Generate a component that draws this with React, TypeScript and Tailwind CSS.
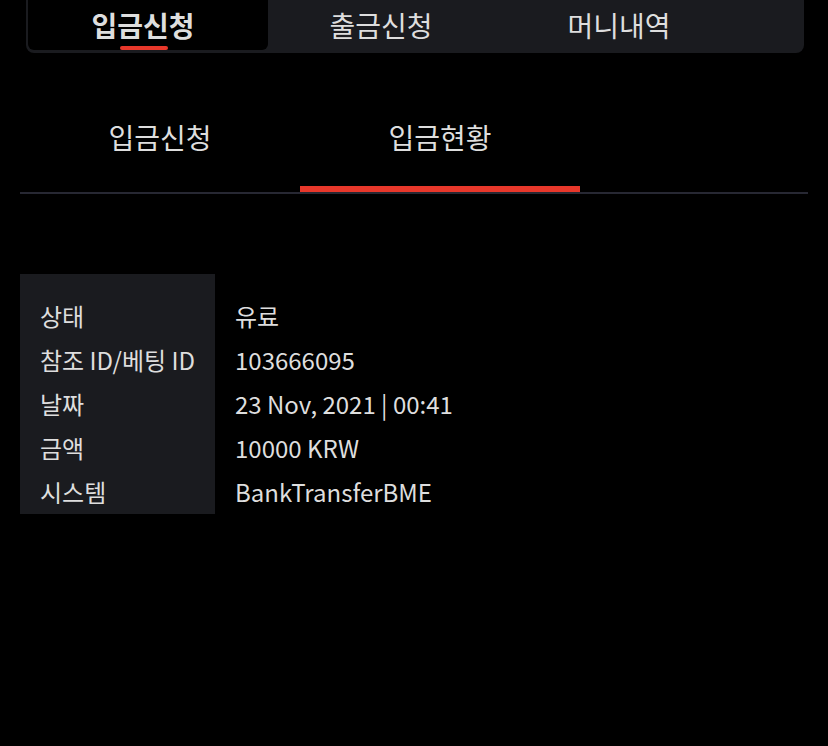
import React from "react";

const rows: [string, string][] = [
  ["상태", "유료"],
  ["참조 ID/베팅 ID", "103666095"],
  ["날짜", "23 Nov, 2021 | 00:41"],
  ["금액", "10000 KRW"],
  ["시스템", "BankTransferBME"],
];

export default function App() {
  return (
    <div className="min-h-[746px] w-[828px] bg-black text-[#dedede] font-['Noto_Sans_CJK_KR','Noto_Sans',sans-serif]">
      <div className="ml-[26px] mr-[24px] h-[53px] flex pl-[2px] pb-[3px] bg-[#1a1b1f] rounded-b-[8px]">
        <div className="relative w-[240px] h-[50px] bg-black rounded-b-[6px] flex items-center justify-center pr-[10px] text-[28px] font-bold leading-none">
          입금신청
          <span className="absolute bottom-0 left-[92px] w-[48px] h-[4px] rounded-full bg-[#e8372a]" />
        </div>
        <div className="w-[238px] h-[50px] flex items-center justify-center pr-[12px] text-[28px] leading-none">
          출금신청
        </div>
        <div className="w-[238px] h-[50px] flex items-center justify-center pr-[12px] text-[28px] leading-none">
          머니내역
        </div>
      </div>

      <div className="mt-[29px] mx-[20px] flex border-b-2 border-[#272833]">
        <div className="w-[280px] h-[110px] flex items-center justify-center text-[28px] leading-none">
          입금신청
        </div>
        <div className="relative w-[280px] h-[110px] flex items-center justify-center text-[28px] leading-none">
          입금현황
          <span className="absolute bottom-0 left-0 right-0 h-[6px] bg-[#e8372a]" />
        </div>
      </div>

      <div className="mt-[80px] ml-[20px] flex text-[24px] leading-none">
        <div className="w-[195px] bg-[#1a1b1f] pt-[20px] pl-[20px]">
          {rows.map(([label]) => (
            <div key={label} className="h-[44px] flex items-center whitespace-nowrap">
              {label}
            </div>
          ))}
        </div>
        <div className="pt-[20px] pl-[20px]">
          {rows.map(([label, value]) => (
            <div key={label} className="h-[44px] flex items-center whitespace-nowrap">
              {value}
            </div>
          ))}
        </div>
      </div>
    </div>
  );
}
